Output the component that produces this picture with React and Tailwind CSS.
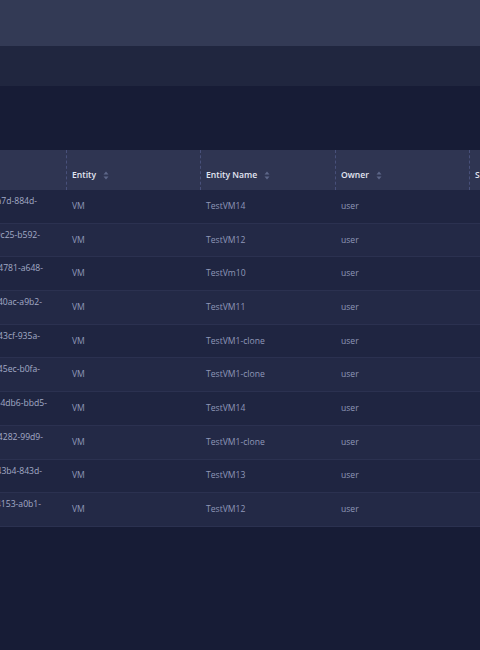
import React from 'react';

const rows = [
  { id: '0a7d-884d-', name: 'TestVM14', alt: false },
  { id: '9c25-b592-', name: 'TestVM12', alt: true },
  { id: '4781-a648-', name: 'TestVm10', alt: false },
  { id: '40ac-a9b2-', name: 'TestVM11', alt: true },
  { id: '43cf-935a-', name: 'TestVM1-clone', alt: false },
  { id: '45ec-b0fa-', name: 'TestVM1-clone', alt: true },
  { id: '-4db6-bbd5-', name: 'TestVM14', alt: false },
  { id: '4282-99d9-', name: 'TestVM1-clone', alt: true },
  { id: '43b4-843d-', name: 'TestVM13', alt: false },
  { id: '4153-a0b1-', name: 'TestVM12', alt: true },
];

const idPad = ['pr-[29px]', 'pr-[26px]', 'pr-[23px]', 'pr-[24px]', 'pr-[26px]', 'pr-[26px]', 'pr-[19px]', 'pr-[23px]', 'pr-[24px]', 'pr-[25px]'];

function SortIcon() {
  return (
    <svg width="6" height="9" viewBox="0 0 6 9" className="ml-[7px] text-[#5d6688]">
      <path d="M3 0.5 L5.5 3.5 H0.5 Z" fill="currentColor" />
      <path d="M3 8.5 L5.5 5.5 H0.5 Z" fill="currentColor" />
    </svg>
  );
}

function HeadCell({ label, width }) {
  return (
    <div className={`${width} shrink-0 h-full flex items-center pt-[10px] pl-[5px] border-l border-dashed border-[#48507a]`}>
      <span className="font-semibold text-[#e3e6f2]">{label}</span>
      {label !== 'S' && <SortIcon />}
    </div>
  );
}

export default function App() {
  return (
    <div className="w-[480px] h-[650px] overflow-hidden bg-[#171c36] text-[8.6px]" style={{ fontFamily: '"Open Sans", "Liberation Sans", sans-serif' }}>
      <div className="h-[46px] bg-[#333a55]" />
      <div className="h-[40px] bg-[#20263f]" />
      <div className="h-[64px] bg-[#171c36]" />

      <div className="h-[40px] bg-[#2f3552] flex">
        <div className="w-[66px] shrink-0" />
        <HeadCell label="Entity" width="w-[134px]" />
        <HeadCell label="Entity Name" width="w-[135px]" />
        <HeadCell label="Owner" width="w-[134px]" />
        <HeadCell label="S" width="w-[20px]" />
      </div>

      {rows.map((r, i) => (
        <div key={i} className={`h-[33.7px] flex border-b border-[#2b3150] ${r.alt ? 'bg-[#232946]' : 'bg-[#1f2541]'}`}>
          <div className={`w-[66px] shrink-0 overflow-hidden flex justify-end pt-[5px] whitespace-nowrap text-[#a3abc6] ${idPad[i]}`}>
            <span>{r.id}</span>
          </div>
          <div className="w-[134px] shrink-0 flex items-center pl-[6px] text-[#8f98b8]">VM</div>
          <div className="w-[135px] shrink-0 flex items-center pl-[6px] text-[#8f98b8]">{r.name}</div>
          <div className="w-[134px] shrink-0 flex items-center pl-[6px] text-[#8f98b8]">user</div>
          <div className="w-[20px] shrink-0" />
        </div>
      ))}
    </div>
  );
}
